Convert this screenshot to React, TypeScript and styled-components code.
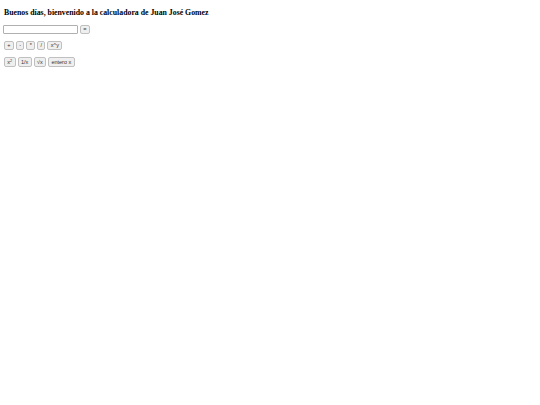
import styled, { createGlobalStyle } from 'styled-components';

const GlobalStyle = createGlobalStyle`
  body {
    margin: 0;
    background: #fff;
    font-family: 'Liberation Serif', 'Times New Roman', serif;
    color: #000;
  }
`;

const unaryOps = [
  { key: 'sq', label: <>x<sup>2</sup></> },
  { key: 'inv', label: '1/x' },
  { key: 'sqrt', label: '√x' },
  { key: 'int', label: 'entero x' },
];

const binaryOps = ['+', '-', '*', '/', 'x^y'];

export default function App() {
  return (
    <>
      <GlobalStyle />
      <Page>
        <Title>Buenos días, bienvenido a la calculadora de Juan José Gomez</Title>
        <Row>
          <Display type='text' />
          <OpButton>=</OpButton>
        </Row>
        <Row>
          {binaryOps.map((op) => (
            <OpButton key={op}>{op}</OpButton>
          ))}
        </Row>
        <Row>
          {unaryOps.map((op) => (
            <OpButton key={op.key} $tall>{op.label}</OpButton>
          ))}
        </Row>
      </Page>
    </>
  );
}

const Page = styled.div`
  padding: 0 4px;
`;

const Title = styled.h4`
  margin: 0;
  padding: 8px 0 0;
  font-size: 7.8px;
  font-weight: bold;
  line-height: 9px;
`;

const Row = styled.div`
  display: flex;
  align-items: center;
  gap: 2px;
  margin-top: 8px;

  & + & {
    margin-top: 7px;
  }
`;

const Display = styled.input`
  box-sizing: border-box;
  width: 75px;
  height: 9px;
  margin: 0 0 0 -1px;
  padding: 0 1px;
  border: 1px solid #b0b0b0;
  border-radius: 1px;
  font-size: 6px;
  background: #fff;
`;

const OpButton = styled.button<{ $tall?: boolean }>`
  box-sizing: border-box;
  height: ${({ $tall }) => ($tall ? '10px' : '9px')};
  margin: 0;
  padding: 0 2.35px;
  border: 1px solid #c0c0c0;
  border-radius: 2px;
  background: #efefef;
  color: #333;
  font-family: 'Liberation Sans', Arial, sans-serif;
  font-size: 5.5px;
  line-height: 7px;

  sup {
    font-size: 3.8px;
    line-height: 0;
    vertical-align: 2px;
  }
`;
